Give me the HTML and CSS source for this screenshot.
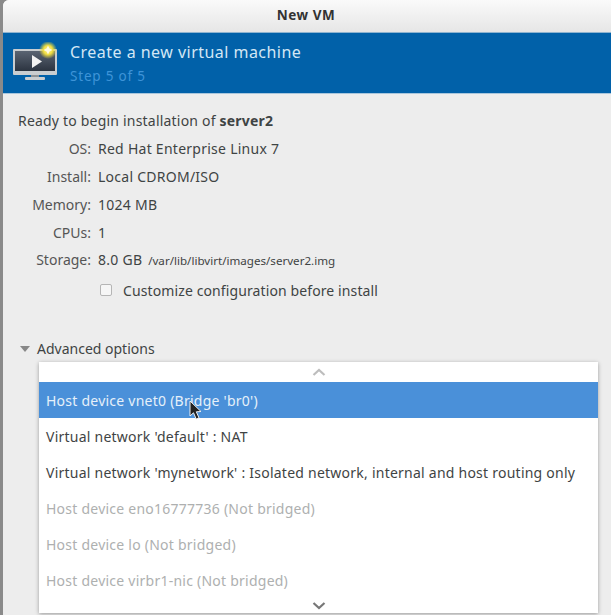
FILE: index.html
```html
<!DOCTYPE html>
<html>
	<head>
		<meta charset="utf-8" />
		<title>New VM</title>
		<link rel="stylesheet" href="styles.css">
	</head>
	<body>
		<div class="window">
			<div class="titlebar">New VM</div>
			<div class="banner">
				<svg class="vm_icon" width="46" height="40" viewBox="0 0 46 40">
					<defs>
						<radialGradient id="glow">
							<stop offset="0" stop-color="#fff6b0"/>
							<stop offset="0.5" stop-color="#f0de40"/>
							<stop offset="1" stop-color="#e8d83a" stop-opacity="0"/>
						</radialGradient>
						<linearGradient id="screen" x1="0" y1="0" x2="0" y2="1">
							<stop offset="0" stop-color="#5a6472"/>
							<stop offset="1" stop-color="#2c3440"/>
						</linearGradient>
					</defs>
					<rect x="0" y="7" width="44" height="26" rx="1" fill="#c9cdd0"/>
					<rect x="2" y="9" width="40" height="20" fill="url(#screen)"/>
					<path d="M19 13 L29 19.5 L19 26 Z" fill="#f2f2f2"/>
					<rect x="18" y="33" width="8" height="2" fill="#8d9296"/>
					<rect x="12" y="35" width="20" height="3" rx="1" fill="#c9cdd0"/>
					<circle cx="35" cy="8" r="9" fill="url(#glow)"/>
					<path d="M35 3.5 L36.4 6.6 L39.5 8 L36.4 9.4 L35 12.5 L33.6 9.4 L30.5 8 L33.6 6.6 Z" fill="#fffbe0"/>
				</svg>
				<div class="banner_text">
					<div class="banner_title">Create a new virtual machine</div>
					<div class="banner_step">Step 5 of 5</div>
				</div>
			</div>
			<div class="content">
				<p class="ready">Ready to begin installation of <b>server2</b></p>
				<div class="summary">
					<span class="label">OS:</span><span>Red Hat Enterprise Linux 7</span>
					<span class="label">Install:</span><span>Local CDROM/ISO</span>
					<span class="label">Memory:</span><span>1024 MB</span>
					<span class="label">CPUs:</span><span>1</span>
					<span class="label">Storage:</span><span>8.0 GB <small>/var/lib/libvirt/images/server2.img</small></span>
				</div>
				<div class="customize"><span class="check"></span>Customize configuration before install</div>
				<div class="advanced"><span class="arrow"></span>Advanced options</div>
			</div>
			<div class="menu">
				<div class="scroll">
					<svg width="14" height="8" viewBox="0 0 14 8"><path d="M1.5 7 L7 2 L12.5 7" fill="none" stroke="#bdbdbd" stroke-width="2.2"/></svg>
				</div>
				<div class="item active">Host device vnet0 (Bridge 'br0')</div>
				<div class="item">Virtual network 'default' : NAT</div>
				<div class="item">Virtual network 'mynetwork' : Isolated network, internal and host routing only</div>
				<div class="item off">Host device eno16777736 (Not bridged)</div>
				<div class="item off">Host device lo (Not bridged)</div>
				<div class="item off">Host device virbr1-nic (Not bridged)</div>
				<div class="scroll">
					<svg width="14" height="8" viewBox="0 0 14 8"><path d="M1.5 1 L7 6 L12.5 1" fill="none" stroke="#777" stroke-width="2.2"/></svg>
				</div>
			</div>
			<svg class="cursor" width="14" height="21" viewBox="0 0 14 21"><path d="M1 1 L1 16 L4.5 12.8 L7.2 19 L10 17.8 L7.3 11.8 L12 11.5 Z" fill="#222" stroke="#eee" stroke-width="1"/></svg>
		</div>
	</body>
</html>
```

FILE: styles.css
```css
*{
	margin:0;
	padding:0;
	box-sizing: border-box;
}
body{
	background:#8a8a8a;
	font-family:"Noto Sans","DejaVu Sans",sans-serif;
	font-size:14px;
	color:#3f4444;
	overflow:hidden;
}
.window{
	position: relative;
	width:611px;
	height:615px;
	margin-left:3px;
	background:#ededed;
	border-radius:6px 0 0 0;
	overflow:hidden;
}
.titlebar{
	height:32px;
	line-height:31px;
	padding-right:5px;
	text-align:center;
	font-weight:bold;
	font-size:13.5px;
	letter-spacing:.5px;
	color:#333;
	background:linear-gradient(#fafafa,#e6e6e6);
}
.banner{
	display:flex;
	align-items:center;
	height:62px;
	padding-left:10px;
	background:#0161a9;
	border-top:1px solid #8fb4d0;
	border-bottom:1px solid #a9c6dc;
}
.vm_icon{
	margin-right:11px;
	margin-top:-3px;
	flex:none;
}
.banner_title{
	font-size:16px;
	letter-spacing:.47px;
	line-height:22px;
	padding-top:1px;
	color:#d3e7f5;
}
.banner_step{
	margin-top:3px;
	font-size:13.5px;
	line-height:20px;
	letter-spacing:.8px;
	color:#3e94d8;
}
.content{
	padding:17px 0 0 15px;
}
.ready{
	line-height:20px;
	letter-spacing:.2px;
}
.summary{
	display:grid;
	grid-template-columns:73px auto;
	grid-auto-rows:27.75px;
	column-gap:7px;
	margin-top:4px;
	align-items:center;
	letter-spacing:.26px;
}
.label{
	text-align:right;
	letter-spacing:0;
	color:#555;
}
small{
	margin-left:2px;
	font-size:11.6px;
	letter-spacing:0;
}
.customize{
	display:flex;
	align-items:center;
	margin-top:5px;
	padding-left:82px;
	height:24px;
	letter-spacing:.11px;
}
.check{
	width:12px;
	height:12px;
	margin-right:11px;
	margin-top:-2px;
	background:#f6f6f6;
	border:1px solid #b5b5b5;
	border-radius:2px;
}
.advanced{
	display:flex;
	align-items:center;
	margin-top:34px;
	height:24px;
	padding-left:2px;
	letter-spacing:0;
}
.arrow{
	width:0;
	height:0;
	margin-right:7px;
	border-left:5.5px solid transparent;
	border-right:5.5px solid transparent;
	border-top:6px solid #888;
}
.menu{
	position:absolute;
	left:36px;
	top:362px;
	width:559px;
	height:251px;
	background:#fff;
	box-shadow:0 1px 4px rgba(0,0,0,.35);
}
.scroll{
	display:flex;
	justify-content:center;
	align-items:center;
	height:20px;
}
.item{
	height:36px;
	line-height:37px;
	padding-left:7px;
	letter-spacing:.24px;
	white-space:nowrap;
}
.active{
	background:#4a90d9;
	color:#e6f0fa;
}
.off{
	color:#aeb0b0;
}
.menu .scroll:last-child{
	height:14px;
	padding-top:2px;
}
.cursor{
	position:absolute;
	left:186px;
	top:400px;
}
```
